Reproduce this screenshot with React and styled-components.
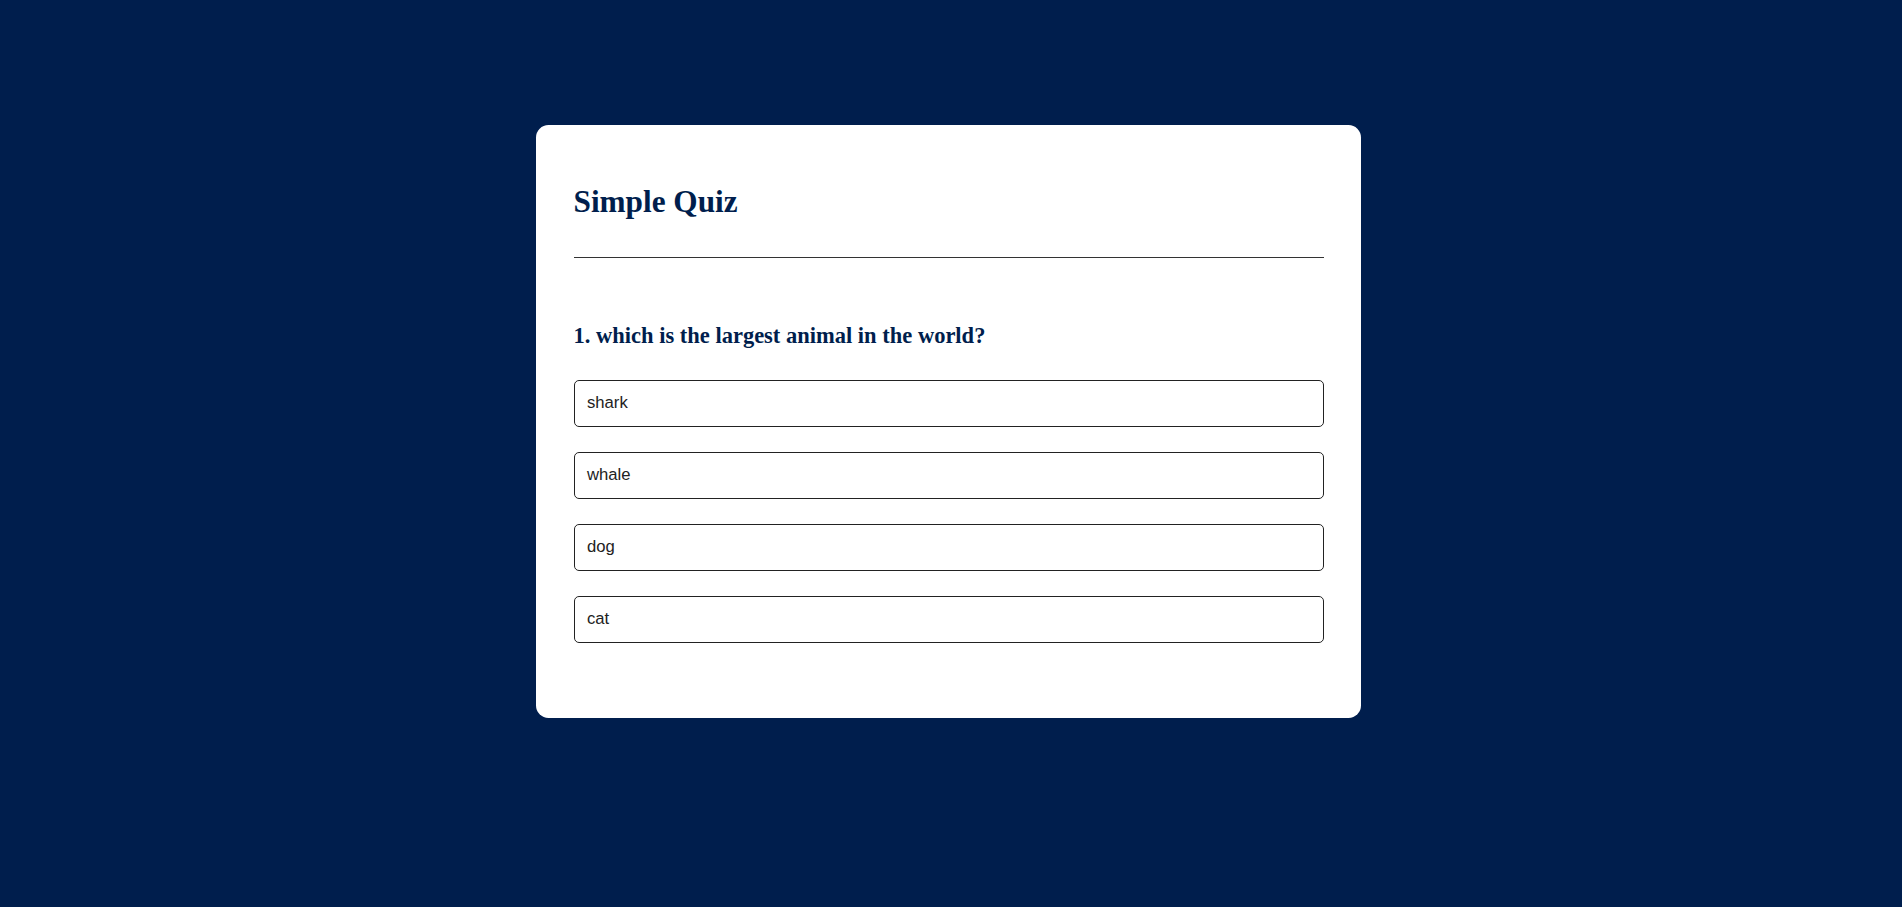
import React from "react";
import styled, { createGlobalStyle } from "styled-components";

const GlobalStyle = createGlobalStyle`
  * {
    box-sizing: border-box;
  }
  body {
    margin: 0;
    background: #001e4d;
    font-family: "Liberation Serif", "Times New Roman", serif;
  }
`;

const Card = styled.div`
  width: 825px;
  margin: 125px 0 0 calc((100% - 830px) / 2);
  padding: 37.5px;
  background: #fff;
  border-radius: 12.5px;
`;

const Title = styled.h1`
  margin: 21px 0 0;
  padding-bottom: 37.5px;
  font-size: 31.25px;
  font-weight: 700;
  color: #001e4d;
  border-bottom: 1.25px solid #333;
`;

const Quiz = styled.div`
  padding: 46px 0 25px;
`;

const Question = styled.h2`
  margin: 18.75px 0;
  font-size: 22.5px;
  font-weight: 700;
  color: #001e4d;
`;

const Answers = styled.div`
  display: flex;
  flex-direction: column;
  gap: 25px;
  padding: 12.5px 0;
`;

const AnswerButton = styled.button`
  display: block;
  width: 100%;
  padding: 12px 12.5px 13px;
  background: #fff;
  color: #222;
  font-family: "Liberation Sans", Arial, sans-serif;
  font-size: 16.67px;
  font-weight: 500;
  text-align: left;
  border: 1.25px solid #222;
  border-radius: 5px;
  cursor: pointer;
`;

const answers = ["shark", "whale", "dog", "cat"];

export default function App() {
  return (
    <>
      <GlobalStyle />
      <Card>
        <Title>Simple Quiz</Title>
        <Quiz>
          <Question>1. which is the largest animal in the world?</Question>
          <Answers>
            {answers.map((a) => (
              <AnswerButton key={a}>{a}</AnswerButton>
            ))}
          </Answers>
        </Quiz>
      </Card>
    </>
  );
}
